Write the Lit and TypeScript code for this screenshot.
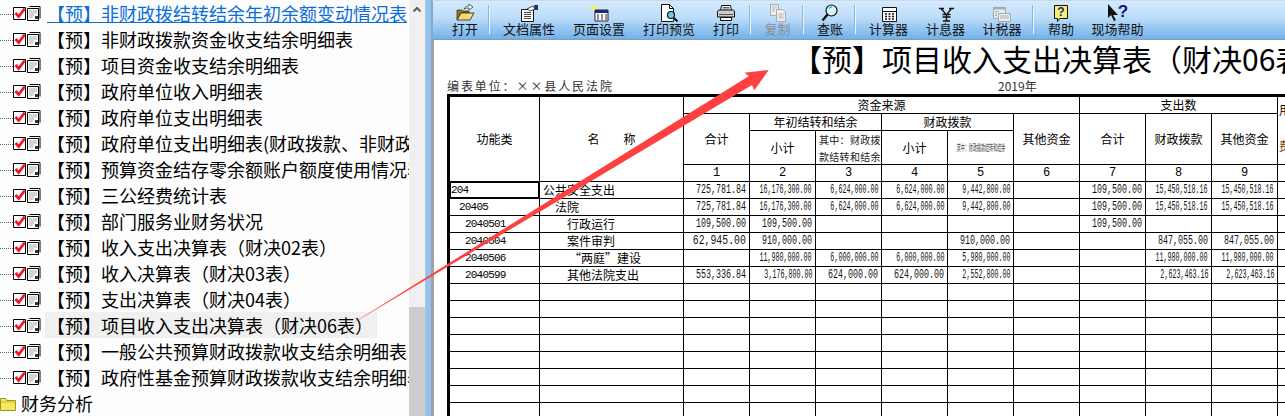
import { LitElement, html, css } from "lit";
import { customElement } from "lit/decorators.js";

const TREE = [
  "【预】非财政拨结转结余年初余额变动情况表",
  "【预】非财政拨款资金收支结余明细表",
  "【预】项目资金收支结余明细表",
  "【预】政府单位收入明细表",
  "【预】政府单位支出明细表",
  "【预】政府单位支出明细表(财政拨款、非财政拨款)",
  "【预】预算资金结存零余额账户额度使用情况表",
  "【预】三公经费统计表",
  "【预】部门服务业财务状况",
  "【预】收入支出决算表（财决02表）",
  "【预】收入决算表（财决03表）",
  "【预】支出决算表（财决04表）",
  "【预】项目收入支出决算表（财决06表）",
  "【预】一般公共预算财政拨款收支结余明细表",
  "【预】政府性基金预算财政拨款收支结余明细表",
];

const ICONS: Record<string, unknown> = {
  open: html`<svg viewBox="0 0 20 18" width="20" height="18"><path d="M2 16V6h5l1 1h6v2H6L2 16z" fill="#8a7a20" stroke="#222" stroke-width=".7"/><path d="M2 16l4-7h13l-4 7z" fill="#f4dc70" stroke="#222" stroke-width=".8"/><path d="M9 5c1-2 3-3 5-3V0l4 3-4 3V4c-2 0-3 0-5 1z" fill="#fff" stroke="#222" stroke-width=".7"/></svg>`,
  props: html`<svg viewBox="0 0 20 18" width="20" height="18"><path d="M2.500 5.500h12v12h-12z" fill="#fff" stroke="#111"/><path d="M5 8.500h7M5 10.500h7M5 12.500h7M5 14.500h7" stroke="#444"/><path d="M8 5l6-3 2 3-5 2z" fill="#fff" stroke="#111" stroke-width=".8"/><path d="M15 1h4v5h-3z" fill="#1a2a80"/></svg>`,
  page: html`<svg viewBox="0 0 20 18" width="20" height="18"><path d="M5 0l1 3 3-1-2 2 2 2-3-1-1 3-1-3-3 1 2-2-2-2 3 1z" fill="#f4f050"/><path d="M6 6h13v11H6z" fill="#fff" stroke="#223" /><path d="M6 6h13v3H6z" fill="#1a2a70"/><path d="M8 11h2M12 11h2M16 11h2M8 13h2M12 13h2M16 13h2M8 15h2M12 15h2M16 15h2" stroke="#223" stroke-width="1.200"/></svg>`,
  preview: html`<svg viewBox="0 0 20 18" width="20" height="18"><path d="M2.500 .5h8l4 4v13h-12z" fill="#fff" stroke="#111"/><path d="M10.500 .5v4h4" fill="none" stroke="#111"/><circle cx="12" cy="11" r="3.500" fill="#60d0e8" stroke="#111" stroke-width="1.200"/><path d="M15 14l3.500 3.500" stroke="#111" stroke-width="2"/></svg>`,
  print: html`<svg viewBox="0 0 20 18" width="20" height="18"><path d="M5.500 1.500h9l1 5h-11z" fill="#fff" stroke="#111"/><path d="M6.500 3.500h7M6.500 5h7" stroke="#666"/><path d="M1.500 8c0-1.500 1-2 2-2h13c1 0 2 .5 2 2v5h-17z" fill="#ccc" stroke="#111"/><path d="M3 10.500h14" stroke="#555"/><path d="M4.500 13.500h11v3h-11z" fill="#fff" stroke="#111"/></svg>`,
  copy: html`<svg viewBox="0 0 20 18" width="20" height="18"><path d="M2.500 .5h8v11h-8z" fill="#eee" stroke="#aaa"/><path d="M8.500 5.500h6l3 3v9h-9z" fill="#eee" stroke="#aaa"/><path d="M4 3h5M4 5h3M4 7h3M10.500 10h5M10.500 12h5M10.500 14h5" stroke="#b5b5b5"/></svg>`,
  find: html`<svg viewBox="0 0 20 18" width="20" height="18"><circle cx="11.500" cy="6.500" r="5.500" fill="#d8f6fa" stroke="#111" stroke-width="1.200"/><path d="M9 4.500c.8-1 1.800-1.500 3-1.500" stroke="#40b8d0" stroke-width="1.500" fill="none"/><path d="M7.500 10.500L2.500 16.500" stroke="#111" stroke-width="2.400"/></svg>`,
  calc: html`<svg viewBox="0 0 20 18" width="20" height="18"><path d="M3.500 3.500h14v14h-14z" fill="#fff" stroke="#111"/><path d="M3.500 7.500h14" stroke="#111"/><path d="M6 10h2M9.500 10h2M13 10h2M6 12.500h2M9.500 12.500h2M13 12.500h2M6 15h2M9.500 15h2M13 15h2" stroke="#111" stroke-width="1.300"/></svg>`,
  rate: html`<svg viewBox="0 0 20 18" width="20" height="18"><path d="M3 4.500h5M13 4.500h5M5 4.500l5.500 6.500 5-6.500M10.500 11v6M7 17h7M6.500 10.500h8M6.500 13h8" fill="none" stroke="#111" stroke-width="1.400"/></svg>`,
  tax: html`<svg viewBox="0 0 20 18" width="20" height="18"><path d="M1.500 3.500h12v11h-12z" fill="#e8eef0" stroke="#9aa"/><path d="M1.500 3.500h12v2h-12z" fill="#aab"/><path d="M6.500 9.500h12v8h-12z" fill="#eee" stroke="#9aa"/><path d="M3 7.500h4M3 9.500h2M3 11.500h2M8 12h9M8 14h9" stroke="#aab"/></svg>`,
  help: html`<svg viewBox="0 0 20 18" width="20" height="18"><path d="M3.500 1.500h13v13h-8l-2 3v-3h-3z" fill="#f6f070" stroke="#111"/><text x="10" y="12" font-family="Liberation Sans" font-size="12" font-weight="700" fill="#20209a" text-anchor="middle">?</text></svg>`,
  cursor: html`<svg viewBox="0 0 24 18" width="24" height="18"><path d="M2 0v14l3-3 3 6 2-1-3-5h5z" fill="#111"/><text x="17" y="13" font-family="Liberation Sans" font-size="17" font-weight="700" fill="#10108a" text-anchor="middle">?</text></svg>`,
};

const TOOLS: { k: string; label?: string; w?: number; off?: boolean }[] = [
  { k: "open", label: "打开", w: 48 },
  { k: "sep" },
  { k: "props", label: "文档属性", w: 76 },
  { k: "page", label: "页面设置", w: 64 },
  { k: "preview", label: "打印预览", w: 76 },
  { k: "print", label: "打印", w: 38 },
  { k: "sep" },
  { k: "copy", label: "复制", w: 51, off: true },
  { k: "sep" },
  { k: "find", label: "查账", w: 50 },
  { k: "sep" },
  { k: "calc", label: "计算器", w: 63 },
  { k: "rate", label: "计息器", w: 51 },
  { k: "tax", label: "计税器", w: 62 },
  { k: "sep" },
  { k: "help", label: "帮助", w: 52 },
  { k: "cursor", label: "现场帮助", w: 61 },
];

const A = "15,450,518.16";
const ROWS: { code: string; ci: string; name: string; ni: string; v: string[] }[] = [
  { code: "204", ci: "c0", name: "公共安全支出", ni: "n0", v: ["725,781.84", "16,176,300.00", "6,624,000.00", "6,624,000.00", "9,442,800.00", "", "109,500.00", A, A] },
  { code: "20405", ci: "c1", name: "法院", ni: "n1", v: ["725,781.84", "16,176,300.00", "6,624,000.00", "6,624,000.00", "9,442,800.00", "", "109,500.00", A, A] },
  { code: "2040501", ci: "c2", name: "行政运行", ni: "n2", v: ["109,500.00", "109,500.00", "", "", "", "", "109,500.00", "", ""] },
  { code: "2040504", ci: "c2", name: "案件审判", ni: "n2", v: ["62,945.00", "910,000.00", "", "", "910,000.00", "", "", "847,055.00", "847,055.00"] },
  { code: "2040506", ci: "c2", name: "“两庭”建设", ni: "n3", v: ["", "11,980,000.00", "6,000,000.00", "6,000,000.00", "5,980,000.00", "", "", "11,980,000.00", "11,980,000.00"] },
  { code: "2040599", ci: "c2", name: "其他法院支出", ni: "n2", v: ["553,336.84", "3,176,800.00", "624,000.00", "624,000.00", "2,552,800.00", "", "", "2,623,463.16", "2,623,463.16"] },
];

const GLYPH = 7.2;
const fitted = (v: string) => {
  const target = v.length === 9 ? 53 : v.length === 10 ? 50 : v.length === 12 ? 48 : 52;
  return (target / (v.length * GLYPH)).toFixed(3);
};

@customElement("app-root")
export class AppRoot extends LitElement {
  static styles = css`
    :host { display: block; width: 1285px; height: 416px; overflow: hidden; position: relative; background: #fff; font-family: "Noto Sans CJK SC", "Liberation Sans", sans-serif; color: #000; }
    .app { display: flex; height: 416px; }
    .tree { width: 409px; flex: none; background: #fdfdfd; overflow: hidden; }
    .row { height: 26px; display: flex; align-items: center; font-size: 18px; white-space: nowrap; overflow: hidden; }
    .dots { width: 13px; flex: none; border-top: 1px dotted #666; margin-top: 2px; }
    .row svg { flex: none; margin-top: 1px; }
    .gap { width: 4px; flex: none; }
    .label { flex: none; height: 26px; line-height: 27px; padding: 0 4px 0 2px; }
    .label.sel { background: #f0f0f0; }
    .label.link { color: #0a6ed8; height: 22px; line-height: 27px; box-sizing: content-box; border-bottom: 1px solid #0a6ed8; margin: 0 0 3px 2px; padding: 0; overflow: hidden; width: 360px; }
    .folder .label { padding: 0 0 0 5px; }
    .scroll { width: 16px; flex: none; background: #f0f0f0; display: flex; flex-direction: column; }
    .up { height: 18px; display: flex; align-items: center; justify-content: center; }
    .track { height: 289px; }
    .thumb { flex: 1; background: #cdcdcd; }
    .split { width: 6px; flex: none; background: #90c3f0; border-left: 1px solid #b4c4d4; box-sizing: border-box; }
    .pane { flex: 1; min-width: 0; overflow: hidden; display: flex; flex-direction: column; }
    .bar { height: 40px; flex: none; box-sizing: border-box; display: flex; padding-left: 8px; border-left: 2px solid #8fa6bf; border-top: 1px solid #c8d6f8; border-bottom: 1px solid #909aa4; background: linear-gradient(#d5ebfd, #bcdcf9 45%, #6fb1ea); }
    .tool { flex: none; display: flex; flex-direction: column; align-items: center; font-size: 13px; line-height: 16px; color: #111; padding-top: 3px; }
    .tool.off { color: #8d8d8d; }
    .tool svg { height: 18px; display: block; }
    .tool span { margin-top: -1px; }
    .sep { flex: none; width: 1px; height: 29px; margin: 4px 1px 0 0; background: #eaf4fd; box-shadow: -1px 0 0 #8cb8df; }
    .sep.push { margin-left: 5px; }
    .paper { flex: 1; min-height: 0; border-left: 3px solid #a0a0a0; padding-left: 13px; background: #fff; }
    .title { height: 38px; line-height: 37px; font-size: 30px; padding-left: 345px; white-space: nowrap; }
    .meta { height: 16px; box-sizing: border-box; padding-bottom: 2px; display: flex; align-items: center; font-size: 12px; color: #333; white-space: nowrap; }
    .org { width: 551px; flex: none; letter-spacing: 1.9px; }
    .sheet { display: grid; width: 894px; grid-template-columns: 90px 144px repeat(10, 66px); grid-template-rows: 17px 17px 34px 17px; grid-auto-rows: 17px; border-left: 3px solid #000; border-top: 3px solid #000; }
    .c { box-sizing: border-box; border-right: 1px solid #000; border-bottom: 1px solid #000; display: flex; align-items: center; justify-content: center; font-size: 12px; line-height: 14px; white-space: nowrap; overflow: hidden; min-width: 0; }
    .r2 { grid-row: span 2; } .r3 { grid-row: span 3; } .r4 { grid-row: span 4; }
    .s2 { grid-column: span 2; } .s3 { grid-column: span 3; } .s6 { grid-column: span 6; }
    .spread { gap: 24px; }
    .small { font-size: 10px; line-height: 17px; letter-spacing: .3px; justify-content: flex-start; padding-left: 3px; color: #222; white-space: normal; }
    .squeeze { font-size: 9px; color: #444; }
    .squeeze span { display: inline-block; transform: scaleX(.45); }
    .stub { flex-direction: column; align-items: flex-start; justify-content: flex-start; padding: 6px 0 0 1px; gap: 22px; }
    .stub .warm { color: #7a4a10; }
    .idx { font-family: "Liberation Mono", monospace; font-size: 12px; }
    .code { justify-content: flex-start; font-family: "Liberation Mono", monospace; font-size: 11px; letter-spacing: -.8px; }
    .code.c0 { padding-left: 1px; } .code.c1 { padding-left: 9px; } .code.c2 { padding-left: 15px; }
    .code.sel { box-shadow: inset 0 0 0 1px #000; }
    .name { justify-content: flex-start; }
    .name.n0 { padding-left: 3px; } .name.n1 { padding-left: 15px; } .name.n2 { padding-left: 27px; } .name.n3 { padding-left: 29px; }
    .num { justify-content: flex-end; padding-right: 3px; font-family: "Liberation Mono", monospace; font-size: 12px; color: #111; }
    .num span { display: inline-block; transform-origin: right center; transform: scaleX(var(--sx)); }
    .arrow { position: absolute; left: 0; top: 0; pointer-events: none; }
  `;

  private treeIcon() {
    return html`<svg width="28" height="15" viewBox="0 0 28 15"><path d="M.5 1.500h12v12H.5z" fill="#fff" stroke="#000"/><path d="M2.500 7l3.200 3.500 6-8" fill="none" stroke="#f01828" stroke-width="2.800"/><path d="M16.500 .5h10.500v12" fill="none" stroke="#000"/><path d="M14.500 2.500h11v12h-11z" fill="#fff" stroke="#000"/><path d="M16 5h8M16 7h8M16 9h5M16 11h4" stroke="#a8a8a8"/><path d="M22 10h3v3h-3z" fill="#333"/></svg>`;
  }

  render() {
    const pushSep = new Set([6]);
    return html`
      <div class="app">
        <div class="tree">
          ${TREE.map((t, i) => html`<div class="row"><div class="dots"></div>${this.treeIcon()}<div class="gap"></div><div class="label ${i === 0 ? "link" : i === 12 ? "sel" : ""}">${t}</div></div>`)}
          <div class="row folder"><svg width="16" height="14" viewBox="0 0 16 14"><path d="M.5 3V1.500h5l1 2h9v10H.5z" fill="#f4e85c" stroke="#a09428"/><path d="M1 5h14" stroke="#c8bc40"/></svg><div class="label">财务分析</div></div>
        </div>
        <div class="scroll">
          <div class="up"><svg width="10" height="7" viewBox="0 0 10 7"><path d="M1.500 5.500L5 2l3.500 3.500" fill="none" stroke="#606060" stroke-width="2"/></svg></div>
          <div class="track"></div>
          <div class="thumb"></div>
        </div>
        <div class="split"></div>
        <div class="pane">
          <div class="bar">
            ${TOOLS.map((t, i) => t.k === "sep"
              ? html`<div class="sep ${pushSep.has(i) ? "push" : ""}"></div>`
              : html`<div class="tool ${t.off ? "off" : ""}" style="width:${t.w}px">${ICONS[t.k]}<span>${t.label}</span></div>`)}
          </div>
          <div class="paper">
            <div class="title">【预】项目收入支出决算表（财决06表）</div>
            <div class="meta"><div class="org">编表单位：××县人民法院</div><div>2019年</div></div>
            <div class="sheet">
              <div class="c r4">功能类</div>
              <div class="c r4 spread"><span>名</span><span>称</span></div>
              <div class="c s6">资金来源</div>
              <div class="c s3">支出数</div>
              <div class="c r3 stub"><span>用</span><span class="warm">费</span></div>
              <div class="c r2">合计</div>
              <div class="c s2">年初结转和结余</div>
              <div class="c s2">财政拨款</div>
              <div class="c r2">其他资金</div>
              <div class="c r2">合计</div>
              <div class="c r2">财政拨款</div>
              <div class="c r2">其他资金</div>
              <div class="c">小计</div>
              <div class="c small"><div>其中：财政拨<br />款结转和结余</div></div>
              <div class="c">小计</div>
              <div class="c squeeze"><span>其中：财政拨款结转和结余</span></div>
              ${[1, 2, 3, 4, 5, 6, 7, 8, 9, ""].map((n) => html`<div class="c idx">${n}</div>`)}
              ${ROWS.map((r, i) => html`
                <div class="c code ${r.ci} ${i === 0 ? "sel" : ""}">${r.code}</div>
                <div class="c name ${r.ni}">${r.name}</div>
                ${r.v.map((v) => html`<div class="c num">${v ? html`<span style="--sx:${fitted(v)}">${v}</span>` : ""}</div>`)}
                <div class="c"></div>`)}
              ${Array.from({ length: 8 * 12 }).map(() => html`<div class="c"></div>`)}
            </div>
          </div>
        </div>
      </div>
      <svg class="arrow" width="1285" height="416" viewBox="0 0 1285 416"><polygon points="345,328 749,76 744.300,72.700 768.700,70 754.300,90.300 752,85" fill="#ff4040"/></svg>
    `;
  }
}
